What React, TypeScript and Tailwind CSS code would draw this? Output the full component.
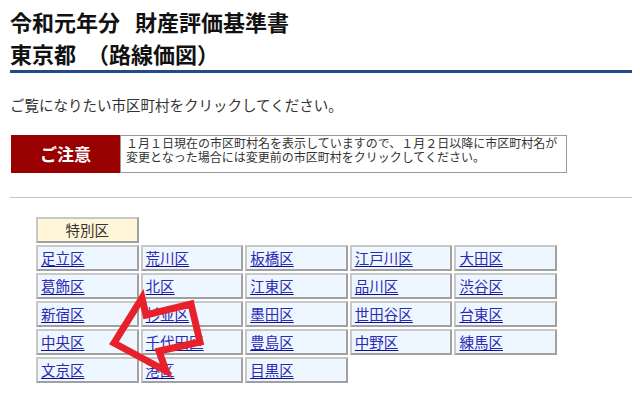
const rows: string[][] = [
  ["足立区", "荒川区", "板橋区", "江戸川区", "大田区"],
  ["葛飾区", "北区", "江東区", "品川区", "渋谷区"],
  ["新宿区", "杉並区", "墨田区", "世田谷区", "台東区"],
  ["中央区", "千代田区", "豊島区", "中野区", "練馬区"],
  ["文京区", "港区", "目黒区", "", ""],
];

const font = { fontFamily: '"Noto Sans CJK JP", "Noto Sans", sans-serif' };

export default function App() {
  return (
    <div className="relative w-[640px] h-[411px] bg-white pl-[10px] pr-[8px] pt-[5px] overflow-hidden" style={font}>
      {/* Title */}
      <h1 className="text-[22px] leading-[32px] font-bold text-[#111]">
        <div>
          令和元年分<span className="ml-[15px]">財産評価基準書</span>
        </div>
        <div>
          東京都<span className="ml-[11px]">（路線価図）</span>
        </div>
      </h1>
      <div className="mt-[1px] h-[3px] bg-[#1f4b8e]" />

      <p className="mt-[22px] text-[14.5px] leading-[20px] text-[#333]">
        ご覧になりたい市区町村をクリックしてください。
      </p>

      {/* Notice */}
      <div className="mt-[20px] ml-[1px] flex h-[38px]">
        <div className="w-[109px] bg-[#990000] text-white text-[17px] font-bold flex items-center justify-center">
          ご注意
        </div>
        <div className="w-[447px] border border-[#9a9a9a] pl-[5px] text-[12px] leading-[14px] text-[#333]">
          <div>１月１日現在の市区町村名を表示していますので、１月２日以降に市区町村名が</div>
          <div>変更となった場合には変更前の市区町村をクリックしてください。</div>
        </div>
      </div>

      <div className="mt-[24px] h-[1px] bg-[#c4c4c4]" />

      {/* Ward grid */}
      <div className="mt-[19px] ml-[26px] w-[521px] grid grid-cols-5 gap-[2px]">
        <div className="h-[26px] border-2 border-t-[#c8c8c8] border-l-[#c8c8c8] border-b-[#a0a0a0] border-r-[#a0a0a0] bg-[#fff5d8] flex items-center justify-center text-[14.5px] text-[#333]">
          特別区
        </div>
        <div className="col-span-4" />
        {rows.flat().map((name, i) =>
          name ? (
            <div
              key={i}
              className="h-[26px] border-2 border-t-[#c8c8c8] border-l-[#c8c8c8] border-b-[#a0a0a0] border-r-[#a0a0a0] bg-[#eef6ff] flex items-center pl-[3px] text-[14.5px]"
            >
              <a href="#" className="text-[#2a2ab4] underline decoration-[#10108a] underline-offset-[2px]">
                {name}
              </a>
            </div>
          ) : (
            <div key={i} />
          )
        )}
      </div>

      {/* Red arrow overlay */}
      <svg className="absolute left-0 top-0 pointer-events-none" width="640" height="411" viewBox="0 0 640 411">
        <polygon
          points="114,343 142,298 146,315 191,304 200,342 159,351 166,371"
          fill="none"
          stroke="#e8202a"
          strokeWidth="7"
          strokeLinejoin="miter"
        />
      </svg>
    </div>
  );
}
